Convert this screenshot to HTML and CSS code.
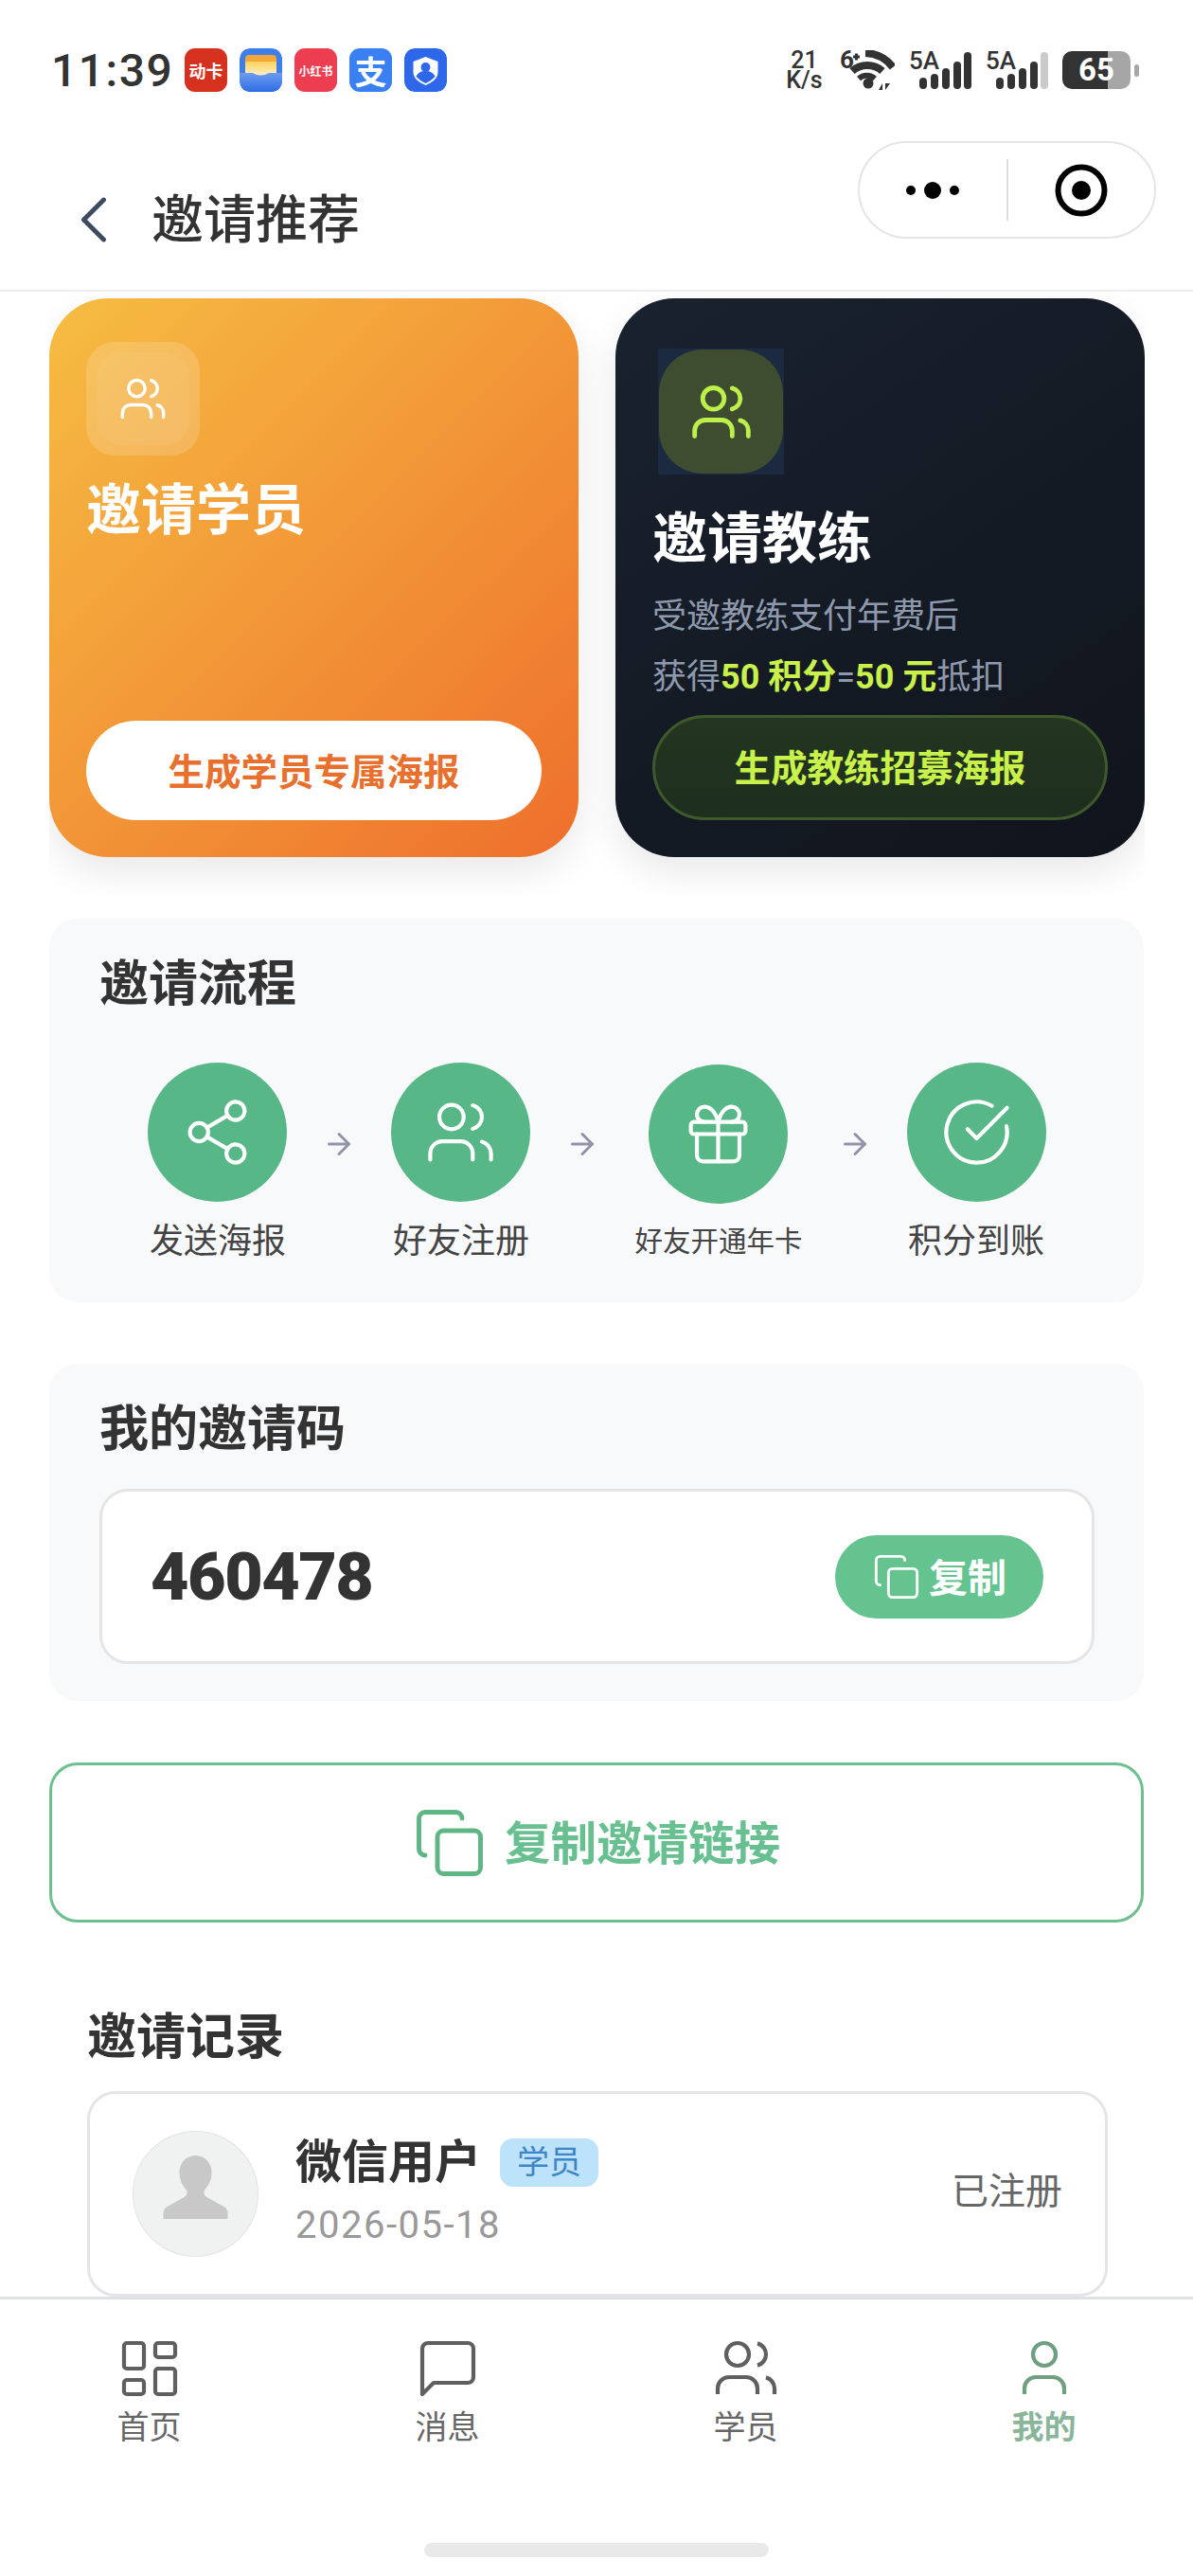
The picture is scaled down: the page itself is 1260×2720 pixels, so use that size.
FILE: index.html
```html
<!DOCTYPE html>
<html lang="zh">
<head>
  <meta charset="UTF-8" />
  <meta name="viewport" content="width=device-width, initial-scale=1" />
  <title>邀请推荐</title>
  <link rel="stylesheet" href="styles.css">
</head>
<body>
  <!-- 图标定义 -->
  <svg class="sprite" xmlns="http://www.w3.org/2000/svg">
    <symbol id="i-users" viewBox="0 0 24 24">
      <path d="M16 21v-2a4 4 0 0 0-4-4H6a4 4 0 0 0-4 4v2"/><circle cx="9" cy="7" r="4"/>
      <path d="M22 21v-2a4 4 0 0 0-3-3.87"/><path d="M16 3.13a4 4 0 0 1 0 7.75"/>
    </symbol>
    <symbol id="i-share" viewBox="0 0 24 24">
      <circle cx="18" cy="5" r="3"/><circle cx="6" cy="12" r="3"/><circle cx="18" cy="19" r="3"/>
      <path d="M8.59 13.51l6.83 3.98"/><path d="M15.41 6.51l-6.82 3.98"/>
    </symbol>
    <symbol id="i-gift" viewBox="0 0 24 24">
      <rect x="3" y="8" width="18" height="4" rx="1"/><path d="M12 8v13"/>
      <path d="M19 12v7a2 2 0 0 1-2 2H7a2 2 0 0 1-2-2v-7"/>
      <path d="M7.5 8a2.5 2.5 0 0 1 0-5A4.8 8 0 0 1 12 8a4.8 8 0 0 1 4.5-5 2.5 2.5 0 0 1 0 5"/>
    </symbol>
    <symbol id="i-check" viewBox="0 0 24 24">
      <path d="M21.801 10A10 10 0 1 1 17 3.335"/><path d="m9 11 3 3L22 4"/>
    </symbol>
    <symbol id="i-arrow" viewBox="0 0 24 24">
      <path d="M5 12h14"/><path d="m12 5 7 7-7 7"/>
    </symbol>
    <symbol id="i-copy" viewBox="0 0 24 24">
      <rect x="8" y="8" width="14" height="14" rx="2"/>
      <path d="M4 16c-1.1 0-2-.9-2-2V4c0-1.1.9-2 2-2h10c1.1 0 2 .9 2 2"/>
    </symbol>
    <symbol id="i-signal" viewBox="0 0 66 40">
      <rect x="11" y="28" width="8" height="12" rx="4"/><rect x="23" y="24" width="8" height="16" rx="4"/>
      <rect x="35" y="18" width="8" height="22" rx="4"/><rect x="47" y="11" width="8" height="29" rx="4"/>
    </symbol>
  </svg>

  <div class="page">
    <header class="header">
      <div class="status-bar">
        <span class="time">11:39</span>
        <div class="app-icons">
          <span class="app app-red">动卡</span>
          <svg class="app" viewBox="0 0 45 46">
            <defs>
              <linearGradient id="walletBlue" x1="0" y1="0" x2="0" y2="1">
                <stop offset="0" stop-color="#6d9cf0"/><stop offset="1" stop-color="#2f6de6"/>
              </linearGradient>
              <linearGradient id="walletCream" x1="0" y1="0" x2="0" y2="1">
                <stop offset="0" stop-color="#fbd25a"/><stop offset="1" stop-color="#fff4d2"/>
              </linearGradient>
            </defs>
            <rect width="45" height="46" rx="11" fill="#3c7fe8"/>
            <rect x="6" y="7" width="33" height="10" rx="4" fill="#f2a63c"/>
            <rect x="6" y="14" width="33" height="16" fill="url(#walletCream)"/>
            <path d="M0 26h14q8 5 17 0h14v9a11 11 0 0 1-11 11H11A11 11 0 0 1 0 35z" fill="url(#walletBlue)"/>
          </svg>
          <span class="app app-pink">小红书</span>
          <span class="app app-alipay">支</span>
          <svg class="app" viewBox="0 0 45 46">
            <rect width="45" height="46" rx="11" fill="#2e67ea"/>
            <path d="M22.500 9l13 5v11c0 7-6 11-13 14-7-3-13-7-13-14V14z" fill="#fff"/>
            <circle cx="22.500" cy="20" r="5" fill="#2e67ea"/>
            <path d="M12.500 30c2-5 6-6 10-6s8 1 10 6c-3 3-6 5-10 7-4-2-7-4-10-7z" fill="#2e67ea"/>
          </svg>
        </div>
        <div class="status-right">
          <div class="net-speed"><span>21</span><span>K/s</span></div>
          <div class="wifi">
            <span class="wifi-label">6</span>
            <svg width="58" height="42" viewBox="0 0 58 42">
              <path d="M14 7h7M17.500 3.500v7" class="wifi-plus"/>
              <path d="M27 3a38 38 0 0 1 29 15" class="wifi-arc"/>
              <path d="M13 22a24 24 0 0 1 32 0" class="wifi-arc"/>
              <path d="M20 30a13 13 0 0 1 17 0" class="wifi-arc thin"/>
              <circle cx="30" cy="35" r="5.500"/>
              <path d="M41 42l4-7v7zM48 35v7l5-7z"/>
            </svg>
          </div>
          <div class="signal">
            <span class="signal-label">5A</span>
            <svg class="signal-bars" viewBox="0 0 66 40"><use href="#i-signal"/><rect x="58" y="1" width="8" height="39" rx="4"/></svg>
          </div>
          <div class="signal">
            <span class="signal-label">5A</span>
            <svg class="signal-bars" viewBox="0 0 66 40"><use href="#i-signal"/><rect x="58" y="1" width="8" height="39" rx="4" fill="#cbcbcb"/></svg>
          </div>
          <div class="battery"><span class="battery-body">65</span><span class="battery-tip"></span></div>
        </div>
      </div>
      <div class="nav-bar">
        <svg class="back" viewBox="0 0 24 24"><path d="m15 18-6-6 6-6"/></svg>
        <h1>邀请推荐</h1>
      </div>
      <div class="capsule">
        <div class="capsule-btn">
          <svg width="60" height="20" viewBox="0 0 60 20"><circle cx="7" cy="10" r="5"/><circle cx="30" cy="10" r="9"/><circle cx="53" cy="10" r="5"/></svg>
        </div>
        <div class="capsule-line"></div>
        <div class="capsule-btn">
          <svg width="58" height="58" viewBox="0 0 58 58"><circle cx="29" cy="29" r="24.500" fill="none" stroke="#000" stroke-width="6"/><circle cx="29" cy="29" r="10"/></svg>
        </div>
      </div>
    </header>

    <main class="content">
      <div class="invite-cards">
        <section class="invite-card card-student">
          <div class="tile tile-student">
            <div class="tile-inner"><svg class="ico ico-sm"><use href="#i-users"/></svg></div>
          </div>
          <h2 class="card-title">邀请学员</h2>
          <button class="card-btn btn-student">生成学员专属海报</button>
        </section>
        <section class="invite-card card-coach">
          <div class="tile tile-coach">
            <div class="tile-inner"><svg class="ico ico-md"><use href="#i-users"/></svg></div>
          </div>
          <h2 class="card-title">邀请教练</h2>
          <p class="card-desc">受邀教练支付年费后</p>
          <p class="card-desc">获得<b>50 积分</b>=<b>50 元</b>抵扣</p>
          <button class="card-btn btn-coach">生成教练招募海报</button>
        </section>
      </div>

      <section class="panel panel-flow">
        <h3 class="section-title">邀请流程</h3>
        <div class="flow">
          <div class="flow-step">
            <div class="flow-circle"><svg class="ico ico-flow"><use href="#i-share"/></svg></div>
            <span class="flow-label">发送海报</span>
          </div>
          <svg class="ico flow-arrow"><use href="#i-arrow"/></svg>
          <div class="flow-step">
            <div class="flow-circle"><svg class="ico ico-flow"><use href="#i-users"/></svg></div>
            <span class="flow-label">好友注册</span>
          </div>
          <svg class="ico flow-arrow"><use href="#i-arrow"/></svg>
          <div class="flow-step">
            <div class="flow-circle"><svg class="ico ico-flow"><use href="#i-gift"/></svg></div>
            <span class="flow-label small">好友开通年卡</span>
          </div>
          <svg class="ico flow-arrow"><use href="#i-arrow"/></svg>
          <div class="flow-step">
            <div class="flow-circle"><svg class="ico ico-flow"><use href="#i-check"/></svg></div>
            <span class="flow-label">积分到账</span>
          </div>
        </div>
      </section>

      <section class="panel panel-code">
        <h3 class="section-title">我的邀请码</h3>
        <div class="code-box">
          <span class="code">460478</span>
          <button class="copy-btn"><svg class="ico ico-copy"><use href="#i-copy"/></svg><span>复制</span></button>
        </div>
      </section>

      <button class="link-btn"><svg class="ico ico-link"><use href="#i-copy"/></svg><span>复制邀请链接</span></button>

      <section class="records">
        <h3 class="section-title">邀请记录</h3>
        <div class="record">
          <div class="avatar">
            <svg width="133" height="133" viewBox="0 0 133 133">
              <path d="M66.500 26c-10 0-17 8-17 18 0 8 3 13 7 18 2 3 1 6-2 8l-18 10c-3 2-4 4-4 7v6h68v-6c0-3-1-5-4-7l-18-10c-3-2-4-5-2-8 4-5 7-10 7-18 0-10-7-18-17-18z"/>
            </svg>
          </div>
          <div class="record-info">
            <div class="record-name">微信用户<span class="tag">学员</span></div>
            <div class="record-date">2026-05-18</div>
          </div>
          <span class="record-status">已注册</span>
        </div>
      </section>
    </main>

    <nav class="tab-bar">
      <div class="tabs">
        <div class="tab">
          <svg class="ico ico-tab" viewBox="0 0 24 24">
            <rect x="3" y="3" width="7" height="9" rx="1"/><rect x="14" y="3" width="7" height="5" rx="1"/>
            <rect x="14" y="12" width="7" height="9" rx="1"/><rect x="3" y="16" width="7" height="5" rx="1"/>
          </svg>
          <span>首页</span>
        </div>
        <div class="tab">
          <svg class="ico ico-tab" viewBox="0 0 24 24"><path d="M21 15a2 2 0 0 1-2 2H7l-4 4V5a2 2 0 0 1 2-2h14a2 2 0 0 1 2 2z"/></svg>
          <span>消息</span>
        </div>
        <div class="tab">
          <svg class="ico ico-tab" viewBox="0 0 24 24"><use href="#i-users"/></svg>
          <span>学员</span>
        </div>
        <div class="tab active">
          <svg class="ico ico-tab" viewBox="0 0 24 24"><path d="M19 21v-2a4 4 0 0 0-4-4H9a4 4 0 0 0-4 4v2"/><circle cx="12" cy="7" r="4"/></svg>
          <span>我的</span>
        </div>
      </div>
      <div class="home-indicator"></div>
    </nav>
  </div>
</body>
</html>
```

FILE: styles.css
```css
* { box-sizing: border-box; }
body { margin: 0; background: #fff; color: #333; font-family: Roboto, "Noto Sans CJK SC", sans-serif; }
h1, h2, h3, p { margin: 0; }
button { font-family: inherit; border: none; padding: 0; }
.sprite { display: none; }
.page { width: 1260px; height: 2720px; display: flex; flex-direction: column; overflow: hidden; }

/* 线性图标 */
.ico { fill: none; stroke: currentColor; stroke-linecap: round; stroke-linejoin: round; flex: none; }

/* 顶部 */
.header { position: relative; height: 308px; flex: none; border-bottom: 2px solid #eee; }
.status-bar { display: flex; align-items: center; height: 46px; margin-top: 51px; padding: 0 57px 0 54px; }
.time { width: 126px; font-size: 48px; font-weight: 500; letter-spacing: 1.5px; color: #333; }
.app-icons { display: flex; gap: 13px; margin-left: 15px; }
.app { display: flex; align-items: center; justify-content: center; width: 45px; height: 46px; border-radius: 11px; color: #fff; font-weight: 700; white-space: nowrap; }
.app-red { background: #d6301f; font-size: 18px; }
.app-pink { background: #ec3d51; font-size: 12px; }
.app-alipay { background: #3a80f2; font-size: 34px; }

.status-right { display: flex; align-items: center; margin-left: auto; color: #333; }
.net-speed { display: flex; flex-direction: column; align-items: center; width: 41px; font-size: 25px; font-weight: 500; line-height: 21px; }
.wifi { position: relative; width: 58px; height: 42px; margin-left: 17px; fill: #333; }
.wifi svg { display: block; }
.wifi-label { position: absolute; left: 0; top: -3px; font-size: 26px; line-height: 26px; font-weight: 700; }
.wifi-plus { stroke: #333; stroke-width: 3; fill: none; }
.wifi-arc { fill: none; stroke: #333; stroke-width: 8; }
.wifi-arc.thin { stroke-width: 6; }
.signal { position: relative; width: 66px; height: 40px; margin-left: 15px; }
.signal-label { position: absolute; left: 0; top: -3px; font-size: 26px; line-height: 26px; font-weight: 500; }
.signal-bars { display: block; width: 66px; height: 40px; fill: #333; }
.battery { display: flex; align-items: center; gap: 4px; margin-left: 15px; }
.battery-body { width: 72px; height: 40px; border-radius: 10px; background: linear-gradient(90deg, #333 66%, #a6a6a6 66%); color: #fff; font-size: 33px; font-weight: 700; line-height: 40px; text-align: center; }
.battery-tip { width: 5px; height: 13px; border-radius: 3px; background: #a6a6a6; }

.nav-bar { display: flex; align-items: center; height: 70px; margin-top: 100px; padding-left: 57px; gap: 19px; }
.nav-bar h1 { font-size: 55px; font-weight: 500; line-height: 70px; color: #333; }
.back { width: 84px; height: 84px; fill: none; stroke: #3c4a60; stroke-width: 1.4; stroke-linecap: round; stroke-linejoin: round; }

/* 小程序胶囊按钮 */
.capsule { position: absolute; top: 149px; right: 39px; width: 315px; height: 103px; display: flex; align-items: center; border: 2px solid #e5e5e5; border-radius: 52px; background: #fff; }
.capsule-btn { flex: 1; display: flex; justify-content: center; }
.capsule-line { width: 2px; height: 65px; background: #ddd; }

/* 内容区 */
.content { flex: 1; min-height: 0; overflow: hidden; padding: 0 51px 0 52px; }
.invite-cards { display: flex; gap: 39px; padding: 7px 0 40px; overflow: hidden; }
.invite-card { flex: 0 0 559px; height: 590px; display: flex; flex-direction: column; align-items: flex-start; padding: 46px 39px 39px; border-radius: 62px; box-shadow: 0 16px 40px rgba(0,0,0,0.09); }
.card-student { background: linear-gradient(135deg, #f6bd42, #ee6f2c); }
.card-coach { background: linear-gradient(145deg, #19222e, #10141c); }
.tile { display: flex; align-items: center; justify-content: center; }
.tile-student { width: 120px; height: 120px; border-radius: 30px; background: rgba(255,255,255,0.16); color: #fff; }
.tile-student .tile-inner { width: 98px; height: 98px; border-radius: 26px; background: rgba(255,255,255,0.06); display: flex; align-items: center; justify-content: center; }
.tile-coach { width: 133px; height: 133px; margin: 7px 0 0 6px; background: #1b2a40; color: #bdf04a; }
.tile-coach .tile-inner { width: 131px; height: 131px; border-radius: 46px; background: #3e4d30; display: flex; align-items: center; justify-content: center; }
.ico-sm { width: 52px; height: 52px; stroke-width: 1.6; }
.ico-md { width: 68px; height: 68px; stroke-width: 1.7; }
.card-title { margin-top: 18px; font-size: 58px; font-weight: 700; line-height: 80px; color: #fff; }
.card-coach .card-title { margin-top: 28px; }
.card-desc { font-size: 36px; line-height: 64px; color: #8e99ad; white-space: nowrap; }
.card-coach .card-title + .card-desc { margin-top: 10px; }
.card-desc b { color: #c8f14b; font-weight: 700; }
.card-btn { width: 100%; margin-top: auto; padding-bottom: 3px; border-radius: 60px; font-size: 38.500px; font-weight: 700; text-align: center; }
.btn-student { height: 105px; background: #fff; color: #e8702e; }
.btn-coach { height: 111px; padding-bottom: 6px; border: 3px solid #3f5a2a; background: linear-gradient(#233620, #1e2e1f); color: #c8f14b; }

.panel { width: 1156px; border-radius: 30px; background: #f8f9fb; padding: 35px 52px 0 53px; }
.section-title { font-size: 52px; font-weight: 700; line-height: 70px; color: #333; }
.panel-flow { height: 405px; margin-top: 25px; }
.flow { display: flex; align-items: center; justify-content: center; gap: 41px; margin-top: 47px; }
.flow-step { display: flex; flex-direction: column; align-items: center; }
.flow-circle { width: 147px; height: 147px; border-radius: 50%; background: #57b787; color: #fff; display: flex; align-items: center; justify-content: center; }
.ico-flow { width: 77px; height: 77px; stroke-width: 1.3; }
.flow-label { margin-top: 19px; font-size: 36px; line-height: 46px; color: #444; white-space: nowrap; }
.flow-label.small { font-size: 29.500px; line-height: 42px; }
.flow-arrow { width: 36px; height: 36px; margin: 0 -4px 40px; stroke-width: 2; color: #8f94a6; }

.panel-code { height: 356px; margin-top: 65px; }
.code-box { display: flex; align-items: center; justify-content: space-between; height: 185px; margin-top: 27px; padding: 0 51px; border: 3px solid #e5e5e5; border-radius: 30px; background: #fff; }
.code { font-size: 70px; font-weight: 900; letter-spacing: -1.500px; color: #333; }
.copy-btn { display: flex; align-items: center; justify-content: center; gap: 8px; width: 220px; height: 88px; border-radius: 44px; background: #65c38f; color: #fff; font-size: 41px; font-weight: 700; }
.copy-btn span { margin-bottom: 4px; }
.ico-copy { width: 52px; height: 52px; stroke-width: 1.3; }

.link-btn { display: flex; align-items: center; justify-content: center; gap: 19px; width: 1156px; height: 169px; margin-top: 65px; border: 3px solid #6dbf90; border-radius: 30px; background: #fff; color: #68c090; font-size: 48.500px; font-weight: 700; }
.link-btn span { margin-bottom: 6px; }
.ico-link { width: 78px; height: 78px; stroke-width: 1.5; color: #5fb583; }

.records { margin-top: 87px; padding: 0 39px 0 40px; }
.record { display: flex; align-items: center; height: 217px; margin-top: 21px; padding: 0 45px; border: 3px solid #e5e5e5; border-radius: 30px; background: #fff; }
.avatar { width: 133px; height: 133px; flex: none; border-radius: 50%; background: #f0f1f1; box-shadow: inset 0 0 0 1px #dfe8e6; }
.avatar svg { display: block; fill: #c8c8c8; }
.record-info { margin-left: 39px; flex: 1; }
.record-name { display: flex; align-items: center; font-size: 49px; font-weight: 700; line-height: 66px; }
.tag { margin-left: 20px; padding: 0 18px; height: 51px; border-radius: 14px; background: #bde3fa; color: #3f86c6; font-size: 34px; font-weight: 400; line-height: 51px; }
.record-date { font-size: 40px; line-height: 66px; letter-spacing: 1.500px; color: #999; }
.record-status { margin-bottom: 13px; font-size: 39px; color: #666; }

/* 底部导航 */
.tab-bar { flex: none; height: 295px; display: flex; flex-direction: column; border-top: 3px solid #dfe0e5; background: #fff; }
.tabs { display: flex; padding-top: 37px; }
.tab { flex: 1; display: flex; flex-direction: column; align-items: center; color: #5f5f5f; font-size: 34px; line-height: 46px; }
.tab span { margin-top: 3px; color: #666; }
.ico-tab { width: 72px; height: 72px; stroke-width: 1.4; stroke-linecap: butt; }
.tab.active { color: #6f9f80; }
.tab.active span { color: #8ab59a; font-weight: 700; }
.home-indicator { width: 364px; height: 15px; margin: auto auto 20px; border-radius: 8px; background: #e9e9e9; }
```
